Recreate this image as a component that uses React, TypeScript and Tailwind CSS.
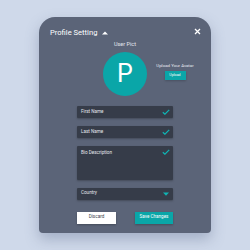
import React from 'react';

const Check: React.FC = () => (
  <svg width="8" height="6" viewBox="0 0 8 6" className="shrink-0">
    <path d="M0.8 3.2 L2.9 5.2 L7.2 0.8" fill="none" stroke="#10b3b3" strokeWidth="1.2" />
  </svg>
);

const Field: React.FC<{ label: string; className?: string; labelTop?: string }> = ({ label, className, labelTop }) => (
  <div className={`w-[96px] bg-[#363c49] rounded-[1px] shadow-[0_1px_2px_rgba(0,0,0,0.25)] flex justify-between pl-[4px] pr-[3px] ${className ?? ''}`}>
    <span className={`text-[4.6px] text-[#e4e7ee] leading-none ${labelTop ?? 'mt-[4px]'}`}>{label}</span>
    <div className="mt-[3px]">
      <Check />
    </div>
  </div>
);

const App: React.FC = () => {
  return (
    <div className="w-[250px] h-[250px] bg-[#cfd9ea] pt-[17px] pl-[39px] font-['Roboto',sans-serif]">
      <div className="w-[172px] h-[216px] bg-[#5b6478] rounded-t-[16px] rounded-b-[4px] shadow-[0_6px_14px_rgba(80,95,130,0.35)] flex flex-col">
        <div className="flex items-center justify-between pl-[11px] pr-[10px] pt-[10px] h-[22px]">
          <div className="flex items-center">
            <span className="text-[7.6px] text-white leading-none">Profile Setting</span>
            <svg width="6" height="4" viewBox="0 0 6 4" className="ml-[5px] mb-[1px]">
              <path d="M0 3.5 L3 0.5 L6 3.5 Z" fill="#ffffff" />
            </svg>
          </div>
          <svg width="7" height="7" viewBox="0 0 7 7" className="mb-[4px]">
            <path d="M1 1 L6 6 M6 1 L1 6" stroke="#ffffff" strokeWidth="1.3" />
          </svg>
        </div>
        <div className="text-center text-[5.5px] text-[#e4e7ee] leading-none mt-[3px]">User Pict</div>
        <div className="grid grid-cols-[1fr_44px_1fr] mt-[4px]">
          <div />
          <div className="w-[44px] h-[44px] rounded-full bg-[#0aa6a8] flex items-center justify-center">
            <span className="text-[25px] text-white leading-none">P</span>
          </div>
          <div className="flex flex-col items-center w-[42px] ml-[7px] pt-[12px]">
            <span className="text-[4.4px] text-[#e4e7ee] leading-none whitespace-nowrap">Upload Your Avatar</span>
            <div className="mt-[3px] w-[21px] h-[9px] bg-[#0aa6a8] flex items-center justify-center shadow-[0_1px_2px_rgba(0,0,0,0.2)]">
              <span className="text-[3.6px] text-white leading-none">Upload</span>
            </div>
          </div>
        </div>
        <div className="flex flex-col pl-[38px] mt-[10px]">
          <Field label="First Name" className="h-[12px]" />
          <Field label="Last Name" className="h-[12px] mt-[8px]" />
          <Field label="Bio Description" className="h-[34px] mt-[8px]" labelTop="mt-[5px]" />
          <div className="w-[96px] h-[12px] mt-[8px] bg-[#363c49] rounded-[1px] shadow-[0_1px_2px_rgba(0,0,0,0.25)] flex justify-between items-center pl-[4px] pr-[4px]">
            <span className="text-[4.6px] text-[#e4e7ee] leading-none">Country</span>
            <svg width="6" height="4" viewBox="0 0 6 4">
              <path d="M0 0.5 L6 0.5 L3 3.8 Z" fill="#10b3b3" />
            </svg>
          </div>
          <div className="flex w-[96px] justify-between mt-[12px]">
            <div className="w-[39px] h-[12px] bg-white flex items-center justify-center shadow-[0_1px_2px_rgba(0,0,0,0.25)]">
              <span className="text-[4.6px] text-[#3a3f4b] leading-none">Discard</span>
            </div>
            <div className="w-[38px] h-[12px] bg-[#0aa6a8] flex items-center justify-center shadow-[0_1px_2px_rgba(0,0,0,0.25)]">
              <span className="text-[4.6px] text-white leading-none">Save Changes</span>
            </div>
          </div>
        </div>
      </div>
    </div>
  );
};

export default App;
